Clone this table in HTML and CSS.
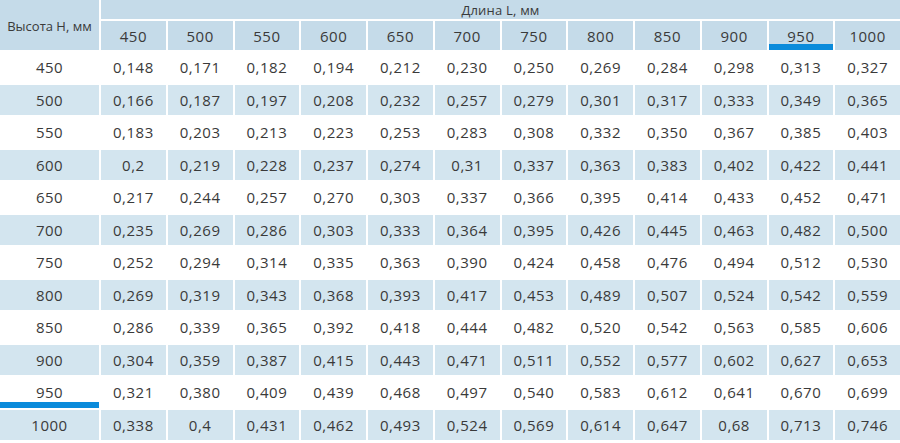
FILE: index.html
```html
<!DOCTYPE html>
<html lang="ru">
<head>
<meta charset="utf-8">
<title>Таблица</title>
<link rel="stylesheet" href="styles.css">
</head>
<body>
<table class="grid">
  <colgroup>
    <col class="col-h">
    <col span="12" class="col-l">
  </colgroup>
  <thead>
    <tr class="h1">
      <th rowspan="2" class="corner">Высота H, мм</th>
      <th colspan="12" class="len">Длина L, мм</th>
    </tr>
    <tr class="h2">
      <th>450</th><th>500</th><th>550</th><th>600</th><th>650</th><th>700</th><th>750</th><th>800</th><th>850</th><th>900</th><th class="mark">950</th><th>1000</th>
    </tr>
  </thead>
  <tbody>
    <tr><td>450</td><td>0,148</td><td>0,171</td><td>0,182</td><td>0,194</td><td>0,212</td><td>0,230</td><td>0,250</td><td>0,269</td><td>0,284</td><td>0,298</td><td>0,313</td><td>0,327</td></tr>
    <tr><td>500</td><td>0,166</td><td>0,187</td><td>0,197</td><td>0,208</td><td>0,232</td><td>0,257</td><td>0,279</td><td>0,301</td><td>0,317</td><td>0,333</td><td>0,349</td><td>0,365</td></tr>
    <tr><td>550</td><td>0,183</td><td>0,203</td><td>0,213</td><td>0,223</td><td>0,253</td><td>0,283</td><td>0,308</td><td>0,332</td><td>0,350</td><td>0,367</td><td>0,385</td><td>0,403</td></tr>
    <tr><td>600</td><td>0,2</td><td>0,219</td><td>0,228</td><td>0,237</td><td>0,274</td><td>0,31</td><td>0,337</td><td>0,363</td><td>0,383</td><td>0,402</td><td>0,422</td><td>0,441</td></tr>
    <tr><td>650</td><td>0,217</td><td>0,244</td><td>0,257</td><td>0,270</td><td>0,303</td><td>0,337</td><td>0,366</td><td>0,395</td><td>0,414</td><td>0,433</td><td>0,452</td><td>0,471</td></tr>
    <tr><td>700</td><td>0,235</td><td>0,269</td><td>0,286</td><td>0,303</td><td>0,333</td><td>0,364</td><td>0,395</td><td>0,426</td><td>0,445</td><td>0,463</td><td>0,482</td><td>0,500</td></tr>
    <tr><td>750</td><td>0,252</td><td>0,294</td><td>0,314</td><td>0,335</td><td>0,363</td><td>0,390</td><td>0,424</td><td>0,458</td><td>0,476</td><td>0,494</td><td>0,512</td><td>0,530</td></tr>
    <tr><td>800</td><td>0,269</td><td>0,319</td><td>0,343</td><td>0,368</td><td>0,393</td><td>0,417</td><td>0,453</td><td>0,489</td><td>0,507</td><td>0,524</td><td>0,542</td><td>0,559</td></tr>
    <tr><td>850</td><td>0,286</td><td>0,339</td><td>0,365</td><td>0,392</td><td>0,418</td><td>0,444</td><td>0,482</td><td>0,520</td><td>0,542</td><td>0,563</td><td>0,585</td><td>0,606</td></tr>
    <tr><td>900</td><td>0,304</td><td>0,359</td><td>0,387</td><td>0,415</td><td>0,443</td><td>0,471</td><td>0,511</td><td>0,552</td><td>0,577</td><td>0,602</td><td>0,627</td><td>0,653</td></tr>
    <tr><td class="mark">950</td><td>0,321</td><td>0,380</td><td>0,409</td><td>0,439</td><td>0,468</td><td>0,497</td><td>0,540</td><td>0,583</td><td>0,612</td><td>0,641</td><td>0,670</td><td>0,699</td></tr>
    <tr><td>1000</td><td>0,338</td><td>0,4</td><td>0,431</td><td>0,462</td><td>0,493</td><td>0,524</td><td>0,569</td><td>0,614</td><td>0,647</td><td>0,68</td><td>0,713</td><td>0,746</td></tr>
  </tbody>
</table>
</body>
</html>
```
FILE: styles.css
```css
html, body {
  margin: 0;
  padding: 0;
  background: #ffffff;
  overflow: hidden;
}

body {
  font-family: "Open Sans", "Noto Sans", sans-serif;
  color: #3a3a3a;
}

.grid {
  table-layout: fixed;
  border-collapse: separate;
  border-spacing: 2px;
  width: 904px;
  margin: -2px 0 0 -2px;
}

.col-h {
  width: 99px;
}

.grid th,
.grid td {
  padding: 0;
  text-align: center;
  vertical-align: middle;
  font-weight: normal;
  font-size: 15px;
  letter-spacing: 0.5px;
  line-height: 18px;
  white-space: nowrap;
}

.grid thead th {
  background: #c5dbe9;
}

.h1 th {
  height: 19px;
}

.h2 th {
  height: 28px;
}

.h2 th {
  padding-top: 1px;
}

.corner {
  font-size: 13px !important;
  letter-spacing: 0 !important;
  padding-top: 2px !important;
}

.len {
  font-size: 13px !important;
  letter-spacing: 0.2px !important;
}

.grid tbody td {
  height: 30.5px;
  background: #ffffff;
}

.grid tbody tr:nth-child(even) td {
  background: #d3e5ef;
}

.mark {
  box-shadow: inset 0 -6px 0 #0b8bdb;
}
```
